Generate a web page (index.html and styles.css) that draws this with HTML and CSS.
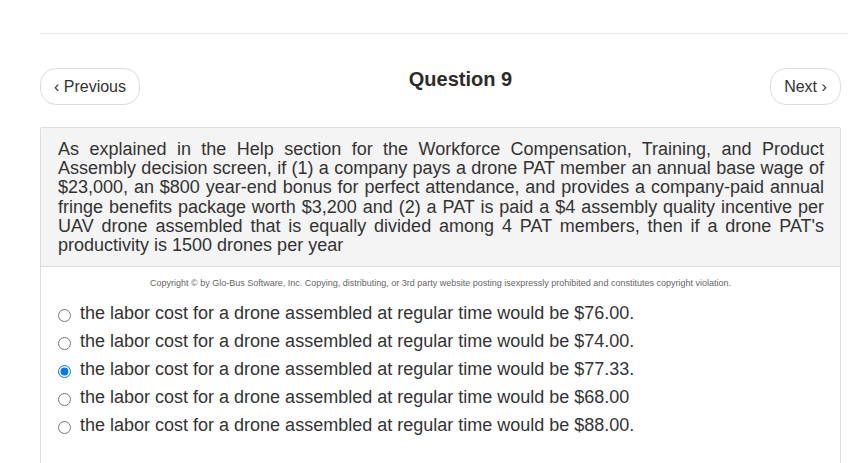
FILE: index.html
```html
<!DOCTYPE html>
<html lang="en">
<head>
<meta charset="utf-8">
<title>Question 9</title>
<link rel="stylesheet" href="styles.css">
</head>
<body>
<div class="topline"></div>
<div class="page">
  <div class="header">
    <button class="navbtn prev">&lsaquo; Previous</button>
    <div class="title">Question 9</div>
    <button class="navbtn next">Next &rsaquo;</button>
  </div>
  <div class="panel">
    <div class="question">As explained in the Help section for the Workforce Compensation, Training, and Product Assembly decision screen, if (1) a company pays a drone PAT member an annual base wage of $23,000, an $800 year-end bonus for perfect attendance, and provides a company-paid annual fringe benefits package worth $3,200 and (2) a PAT is paid a $4 assembly quality incentive per UAV drone assembled that is equally divided among 4 PAT members, then if a drone PAT's productivity is 1500 drones per year</div>
    <div class="copyright">Copyright &copy; by Glo-Bus Software, Inc. Copying, distributing, or 3rd party website posting isexpressly prohibited and constitutes copyright violation.</div>
    <div class="options">
      <label class="option"><input type="radio" name="q9"> the labor cost for a drone assembled at regular time would be $76.00.</label>
      <label class="option"><input type="radio" name="q9"> the labor cost for a drone assembled at regular time would be $74.00.</label>
      <label class="option"><input type="radio" name="q9" checked> the labor cost for a drone assembled at regular time would be $77.33.</label>
      <label class="option"><input type="radio" name="q9"> the labor cost for a drone assembled at regular time would be $68.00</label>
      <label class="option"><input type="radio" name="q9"> the labor cost for a drone assembled at regular time would be $88.00.</label>
    </div>
  </div>
</div>
</body>
</html>
```
FILE: styles.css
```css
html, body {
  margin: 0;
  padding: 0;
  background: #ffffff;
  font-family: "Liberation Sans", Arial, sans-serif;
  color: #333333;
  overflow: hidden;
}

.topline {
  margin: 33px 0 0 40px;
  border-top: 1px solid #e6e6e6;
}

.page {
  margin-left: 40px;
  width: 801px;
}

.header {
  display: flex;
  align-items: flex-start;
  margin-top: 34px;
}

.navbtn {
  box-sizing: border-box;
  height: 37px;
  padding: 0;
  border: 1px solid #dcdcdc;
  border-radius: 16px;
  background: #ffffff;
  color: #333333;
  font-family: "Liberation Sans", Arial, sans-serif;
  font-size: 16px;
  line-height: 35px;
  white-space: nowrap;
  text-align: center;
  cursor: pointer;
}

.prev {
  width: 100px;
}

.next {
  width: 71px;
}

.title {
  flex: 1;
  text-align: center;
  padding-left: 11px;
  font-size: 20px;
  font-weight: bold;
  line-height: 23px;
  color: #2b2b2b;
}

.panel {
  margin-top: 22px;
  border: 1px solid #dddddd;
  border-radius: 2px 2px 0 0;
  min-height: 400px;
}

.question {
  background: #f4f4f4;
  border-bottom: 1px solid #dddddd;
  padding: 12px 16px 11px 17px;
  font-size: 18px;
  line-height: 19.2px;
  text-align: justify;
  color: #333333;
}

.copyright {
  margin-top: 9px;
  text-align: center;
  font-size: 9px;
  line-height: 14px;
  color: #666666;
}

.options {
  margin-top: 9px;
  padding-left: 17px;
}

.option {
  display: block;
  font-size: 18px;
  line-height: 28px;
  color: #333333;
}

.option input {
  width: 13px;
  height: 13px;
  margin: 0 4px 0 0;
  vertical-align: -3px;
}
```
